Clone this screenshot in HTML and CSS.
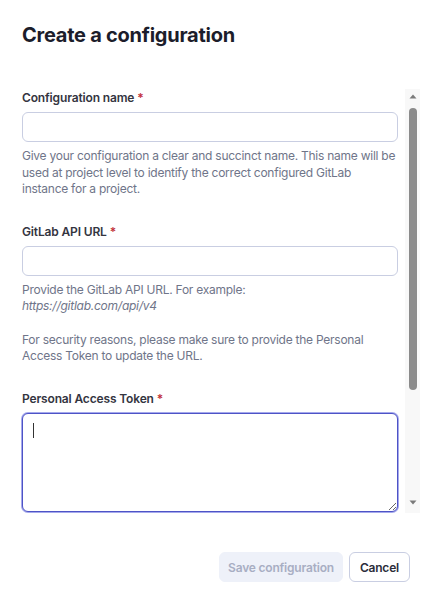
FILE: index.html
```html
<!DOCTYPE html>
<html lang="en">
<head>
<meta charset="utf-8">
<title>Create a configuration</title>
<link rel="stylesheet" href="styles.css">
</head>
<body>
<div class="modal">
  <header class="modal-header">
    <h1 class="modal-title">Create a configuration</h1>
  </header>
  <div class="modal-body">
    <div class="scroll-content">
      <div class="field">
        <label class="field-label" for="cfg-name">Configuration name <span class="req">*</span></label>
        <input class="text-input" id="cfg-name" type="text">
        <p class="help">Give your configuration a clear and succinct name. This name will be used at project level to identify the correct configured GitLab instance for a project.</p>
      </div>
      <div class="field">
        <label class="field-label" for="api-url">GitLab API URL <span class="req">*</span></label>
        <input class="text-input" id="api-url" type="text">
        <p class="help">Provide the GitLab API URL. For example:<br><em>https://gitlab.com/api/v4</em></p>
        <p class="help help-gap">For security reasons, please make sure to provide the Personal Access Token to update the URL.</p>
      </div>
      <div class="field">
        <label class="field-label" for="pat">Personal Access Token <span class="req">*</span></label>
        <div class="textarea-wrap">
          <textarea class="text-area" id="pat"></textarea>
          <span class="caret"></span>
        </div>
      </div>
    </div>
    <div class="scrollbar" aria-hidden="true">
      <svg class="sb-btn" width="15" height="15" viewBox="0 0 15 15"><path d="M4.5 9.5h7l-3.5-4z" fill="#7a7a7a"/></svg>
      <div class="sb-track"><div class="sb-thumb"></div></div>
      <svg class="sb-btn" width="15" height="15" viewBox="0 0 15 15"><path d="M4.5 2.5h7l-3.5 4z" fill="#7a7a7a"/></svg>
    </div>
  </div>
  <footer class="modal-footer">
    <button class="btn btn-primary" type="button" disabled>Save configuration</button>
    <button class="btn btn-secondary" type="button">Cancel</button>
  </footer>
</div>
</body>
</html>
```

FILE: styles.css
```css
html, body {
  margin: 0;
  padding: 0;
  background: #ffffff;
}
body {
  font-family: Inter, "Noto Sans", "Liberation Sans", sans-serif;
  color: #2b2d3a;
}
.modal {
  width: 436px;
  height: 600px;
  display: flex;
  flex-direction: column;
}
.modal-header {
  padding: 21px 22px 0;
}
.modal-title {
  margin: 0;
  font-size: 20px;
  line-height: 28px;
  font-weight: 700;
  letter-spacing: -0.25px;
  color: #1c1d2b;
}
.modal-body {
  margin-top: 40px;
  margin-right: 16px;
  height: 424px;
  flex: none;
  display: flex;
}
.scroll-content {
  flex: 1;
  min-width: 0;
  overflow: hidden;
  padding: 0 7px 0 22px;
}
.scrollbar {
  width: 15px;
  flex: none;
  background: #f8f8f8;
  display: flex;
  flex-direction: column;
}
.sb-btn {
  display: block;
  flex: none;
}
.sb-track {
  flex: 1;
  padding: 4px 3px 0 4px;
}
.sb-thumb {
  height: 282px;
  background: #8b8b8b;
  border-radius: 4px;
}
.field {
  display: flex;
  flex-direction: column;
}
.field + .field {
  margin-top: 25px;
}
.field-label {
  font-size: 12px;
  line-height: 18px;
  font-weight: 600;
  letter-spacing: -0.15px;
  color: #34353f;
  margin-bottom: 5px;
}
.req {
  color: #c2303c;
}
.text-input {
  height: 30px;
  box-sizing: border-box;
  border: 1px solid #c9cee2;
  border-radius: 6px;
  background: #fff;
  font: inherit;
  font-size: 12px;
  padding: 0 10px;
  outline: none;
}
.help {
  margin: 6px 0 0;
  font-size: 12px;
  line-height: 16.6px;
  letter-spacing: -0.25px;
  color: #6f7589;
}
.help-gap {
  margin-top: 16.6px;
}
.textarea-wrap {
  position: relative;
  display: flex;
}
.text-area {
  flex: 1;
  height: 99px;
  box-sizing: border-box;
  border: 1.5px solid #4e53c6;
  box-shadow: 0 0 0 1px #a5a9ec;
  border-radius: 6px;
  resize: vertical;
  font: inherit;
  font-size: 12px;
  padding: 8px 10px;
  outline: none;
  margin: 0;
}
.caret {
  position: absolute;
  left: 11px;
  top: 10px;
  width: 1px;
  height: 15px;
  background: #333;
}
.modal-footer {
  margin-top: 39px;
  display: flex;
  justify-content: flex-end;
  gap: 6px;
  padding-right: 26px;
}
.btn {
  height: 30px;
  box-sizing: border-box;
  border-radius: 6px;
  font-family: inherit;
  font-size: 12px;
  font-weight: 600;
  letter-spacing: -0.2px;
  padding: 0 10px;
}
.btn-primary {
  background: #eef1f9;
  border: 1px solid #eef1f9;
  color: #a8aec3;
  padding: 0 8px;
}
.btn-secondary {
  background: #fff;
  border: 1px solid #c9cee2;
  color: #2b2d3a;
}
```
